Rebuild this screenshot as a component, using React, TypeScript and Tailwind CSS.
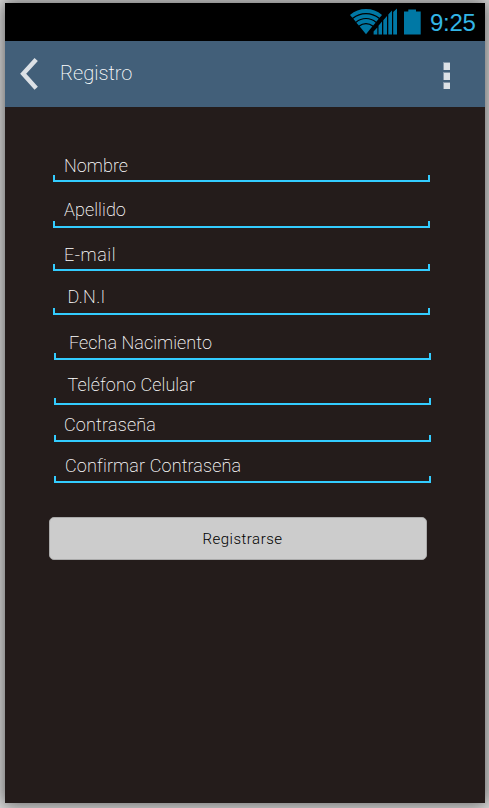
type FieldProps = { label: string; row: string; text: string };

const fields: FieldProps[] = [
  { label: 'Nombre', row: 'ml-12 h-[75px]', text: 'pl-[11px] tracking-[0.06px]' },
  { label: 'Apellido', row: 'ml-12 h-[46px]', text: 'pl-[11px] pb-[2px] tracking-[0.06px]' },
  { label: 'E-mail', row: 'ml-12 h-[43px]', text: 'pl-[11px] tracking-[0.55px]' },
  { label: 'D.N.I', row: 'ml-12 h-[44px]', text: 'pl-[14.5px] pb-[2px] tracking-[0.35px]' },
  { label: 'Fecha Nacimiento', row: 'ml-[49px] h-[45px]', text: 'pl-[15px] pb-px tracking-[0.06px]' },
  { label: 'Teléfono Celular', row: 'ml-[49px] h-[45px]', text: 'pl-[13.5px] pb-1 tracking-[0.1px]' },
  { label: 'Contraseña', row: 'ml-[49px] h-[37px]', text: 'pl-[10px] pb-px tracking-[0.2px]' },
  { label: 'Confirmar Contraseña', row: 'ml-[49px] h-[41px]', text: 'pl-[11px] pb-px tracking-[0.15px]' },
];

function Field({ label, row, text }: FieldProps) {
  return (
    <label className={`flex w-[377px] flex-col justify-end ${row}`}>
      <span className={`text-[18px] leading-[18px] font-extralight whitespace-nowrap text-white ${text}`}>{label}</span>
      <span className="h-[7px] shrink-0 border-x-2 border-b-2 border-[#33ccff]" />
    </label>
  );
}

function StatusBar() {
  return (
    <div className="flex h-[38px] shrink-0 bg-black">
      <svg className="ml-[344px] h-[38px] w-[77px] shrink-0" viewBox="0 0 77 38" fill="#0078a5">
        <g fill="none" stroke="#0078a5" strokeWidth="3.8">
          <path d="M2.2 13.4 A23 23 0 0 1 31.8 13.4" />
          <path d="M5.5 17.3 A17.9 17.9 0 0 1 28.5 17.3" />
          <path d="M8.6 21.1 A13 13 0 0 1 25.4 21.1" />
        </g>
        <path d="M10.7 23.6 A9.7 9.7 0 0 1 23.3 23.6 L17 31.2Z" />
        <path d="M24.6 31.5V28.5L28.3 24.6V31.5ZM29.5 31.5V22.7L33 18.6V31.5ZM34.3 31.5V17.2L38 13V31.5ZM39.3 31.5V11.6L43 7.6V31.5ZM44.2 31.5V9L48 5.5V31.5Z" />
        <path d="M55 8.5H59.3V6.5H67V8.5H71.7V31.5H55Z" />
      </svg>
      <span className="ml-[4px] text-[24px] leading-[39px] tracking-[-0.3px] text-[#33b5e5]" style={{ fontFamily: '"Liberation Sans", Arial, sans-serif' }}>
        9:25
      </span>
    </div>
  );
}

export default function App() {
  return (
    <div className="h-[808px] w-[489px] overflow-hidden bg-[#dddddd] pt-[3px] pl-[5px]" style={{ fontFamily: 'Roboto, sans-serif' }}>
      <main className="flex h-[800px] w-[480px] flex-col bg-[#241c1b] shadow-[0_0_16px_2px_rgba(0,0,0,0.55)]">
        <StatusBar />
        <header className="flex h-[66px] shrink-0 items-center bg-[#425f79]">
          <svg className="ml-[14px] h-9 w-6" viewBox="0 0 24 36" fill="none" stroke="#dce1e6" strokeWidth="4.5">
            <path d="M17.2 3.5 L4.2 17.8 L17.2 32.2" />
          </svg>
          <h1 className="mb-[2px] ml-[17px] text-[20px] leading-6 font-extralight text-white">Registro</h1>
          <div className="mt-[2px] ml-auto mr-[35px] flex flex-col gap-[2px]">
            <i className="h-2 w-[7px] border-t border-l border-[#8496a8] bg-[#dce1e6]" />
            <i className="h-2 w-[7px] border-t border-l border-[#8496a8] bg-[#dce1e6]" />
            <i className="h-[7px] w-[7px] border-t border-l border-[#8496a8] bg-[#dce1e6]" />
          </div>
        </header>
        <form className="flex flex-col">
          {fields.map((field) => (
            <Field key={field.label} {...field} />
          ))}
          <button type="button" className="mt-[34px] ml-[44px] h-[43px] w-[378px] rounded-[5px] border border-[#aaaaaa] bg-[#cccccc] pt-[2px] pl-[9px] text-[15px] font-[350] tracking-[0.5px] text-black">
            Registrarse
          </button>
        </form>
      </main>
    </div>
  );
}
